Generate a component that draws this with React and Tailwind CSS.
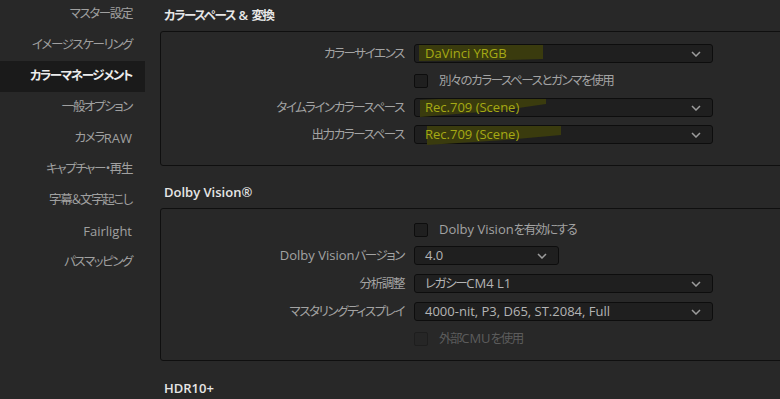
import React from "react";

const menu = [
  "マスター設定",
  "イメージスケーリング",
  "カラーマネージメント",
  "一般オプション",
  "カメラRAW",
  "キャプチャー・再生",
  "字幕＆文字起こし",
  "Fairlight",
  "パスマッピング",
];

// Japanese runs get a narrower setting so they line up with the UI font widths
const Jp = ({ children }) =>
  String(children)
    .split(/([\u3000-\u9fff\uff00-\uffef]+)/)
    .map((part, i) =>
      /[\u3000-\u9fff\uff00-\uffef]/.test(part) ? (
        <span key={i} className="text-[12.5px] tracking-[-1.4px]">
          {part}
        </span>
      ) : (
        <span key={i}>{part}</span>
      )
    );

const Chevron = () => (
  <svg width="10" height="6" viewBox="0 0 10 6" className="shrink-0">
    <polyline points="1,1 5,5 9,1" fill="none" stroke="#9c9c9c" strokeWidth="1.5" />
  </svg>
);

// yellow marker strokes drawn over the screenshot
const Marker = ({ points }) => (
  <svg className="absolute left-0 top-0 pointer-events-none" width="160" height="30" viewBox="0 0 160 30">
    <polygon points={points} fill="#3a3b0e" />
  </svg>
);

const Dropdown = ({ value, width = "w-[299px]", hl, marker }) => (
  <div className={`relative h-[19px] ${width} rounded-[3px] border border-[#0d0d0d] bg-[#1f1f1f] flex items-center justify-between pl-[10px] pr-[11px]`}>
    {marker && <div className="absolute left-0 top-0">{marker}</div>}
    <span className={`relative text-[13px] leading-none ${hl ? "text-[#a6aa14]" : "text-[#b4b4b4]"}`}>
      <Jp>{value}</Jp>
    </span>
    <Chevron />
  </div>
);

const Row = ({ label, children, className = "" }) => (
  <div className={`flex items-center h-[19px] ${className}`}>
    <div className="w-[253px] pr-[10px] text-right text-[13px] text-[#a3a3a3] whitespace-nowrap">
      <Jp>{label}</Jp>
    </div>
    {children}
  </div>
);

const Check = ({ label, disabled }) => (
  <div className="flex items-center gap-[11px]">
    <div className={`w-[14px] h-[14px] rounded-[2px] border ${disabled ? "border-[#1e1e1e] bg-[#262626]" : "border-[#0d0d0d] bg-[#1f1f1f]"}`} />
    <span className={`text-[13px] ${disabled ? "text-[#5c5c5c]" : "text-[#a3a3a3]"}`}>
      <Jp>{label}</Jp>
    </span>
  </div>
);

const Heading = ({ children, className = "" }) => (
  <div className={`pl-[4px] text-[13px] font-semibold text-[#e6e6e6] leading-[18px] ${className}`}>
    <Jp>{children}</Jp>
  </div>
);

export default function App() {
  return (
    <div className="w-[780px] h-[399px] overflow-hidden flex bg-[#282828] font-['Open_Sans','Noto_Sans_CJK_JP',sans-serif] [font-feature-settings:'palt'] select-none">
      <div className="w-[145px] shrink-0 mt-[-1px]">
        {menu.map((m, i) => (
          <div
            key={m}
            className={`h-[31px] flex items-center justify-end pr-[13px] text-[13px] ${i === 2 ? "bg-[#1a1a1a] text-[#ececec] font-semibold" : "text-[#a0a0a0]"}`}
          >
            <Jp>{m}</Jp>
          </div>
        ))}
      </div>

      <div className="flex-1 pl-[15px] min-w-0">
        <Heading className="h-[31px] pt-[6px]">カラースペース &amp; 変換</Heading>
        <div className="w-[640px] h-[135px] rounded-[3px] border border-[#0f0f0f] pt-[12px] flex flex-col gap-[8px]">
          <Row label="カラーサイエンス">
            <Dropdown value="DaVinci YRGB" hl marker={<Marker points="4,0 128,0 128,14 90,15 4,16" />} />
          </Row>
          <Row label="">
            <Check label="別々のカラースペースとガンマを使用" />
          </Row>
          <Row label="タイムラインカラースペース">
            <Dropdown value="Rec.709 (Scene)" hl marker={<Marker points="5,1 131,-6 131,5 90,11 5,18" />} />
          </Row>
          <Row label="出力カラースペース">
            <Dropdown value="Rec.709 (Scene)" hl marker={<Marker points="12,0 146,0 146,9 90,14 12,19" />} />
          </Row>
        </div>

        <Heading className="h-[42px] pt-[17px]">Dolby Vision®</Heading>
        <div className="w-[640px] h-[153px] rounded-[3px] border border-[#0f0f0f] pt-[11px] flex flex-col">
          <Row label="">
            <Check label="Dolby Visionを有効にする" />
          </Row>
          <Row label="Dolby Visionバージョン" className="mt-[7px]">
            <Dropdown value="4.0" width="w-[145px]" />
          </Row>
          <Row label="分析調整" className="mt-[9px]">
            <Dropdown value="レガシーCM4 L1" />
          </Row>
          <Row label="マスタリングディスプレイ" className="mt-[9px]">
            <Dropdown value="4000-nit, P3, D65, ST.2084, Full" />
          </Row>
          <Row label="" className="mt-[8px]">
            <Check label="外部CMUを使用" disabled />
          </Row>
        </div>

        <Heading className="pt-[18px]">HDR10+</Heading>
      </div>
    </div>
  );
}
